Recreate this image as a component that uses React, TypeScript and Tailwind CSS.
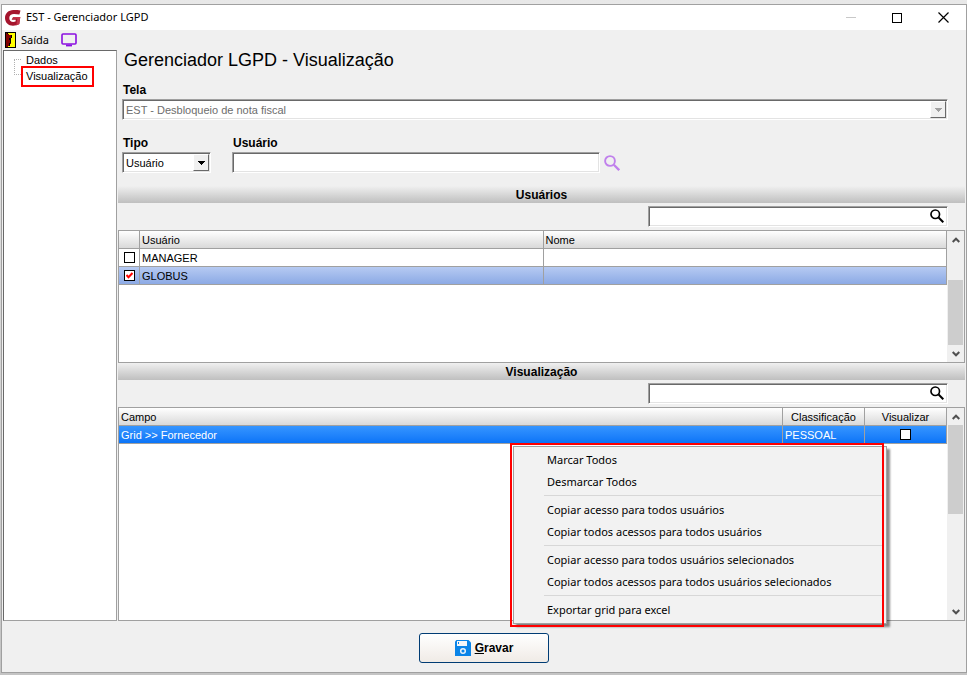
import { useState } from "react";

type IconProps = { className?: string };

function LogoIcon({ className = "" }: IconProps) {
  return (
    <svg className={className} viewBox="0 0 16 16" fill="none" aria-hidden="true">
      <path
        d="M15.500.6C13 .1 10.500 0 8.300.1 3.500.3 0 3.400 0 8c0 4.500 3.300 7.700 8 7.700 2.300 0 4.600-.6 6.300-1.700L15.300 7H8.200L6.600 9.800h4.200l-.3 1.700c-.7.3-1.400.5-2.200.5C6 12 4.300 10.400 4.300 8c0-2.600 1.900-4.100 4.700-4.100 1.800 0 3.600.2 5.400.7z"
        fill="#a5152d"
      />
      <path d="M8.200 7h7.100l-1 7c-.9.600-1.900 1-3 1.300l1-6.500H7.200z" fill="#c4344a" />
    </svg>
  );
}

function DoorIcon({ className = "" }: IconProps) {
  return (
    <svg className={className} viewBox="0 0 11 16" shapeRendering="crispEdges" aria-hidden="true">
      <path d="M0 0h11v16H0z" fill="#000" />
      <path d="M3 1h7v14H3z" fill="#ff0" />
      <path d="M1 1h1v1h2v1h2v9H5v1H4v1H3v1H1z" fill="#800000" />
      <path d="M6 3h1v3H6zM5 6h1v5H5zM4 11h1v3H4zM4 6h1v2H4z" fill="#000" />
    </svg>
  );
}

function MonitorIcon({ className = "" }: IconProps) {
  return (
    <svg className={className} viewBox="0 0 16 14" fill="none" aria-hidden="true">
      <rect x="1" y="1" width="14" height="10" rx="1" stroke="#8a0fe0" strokeWidth="1.600" />
      <path d="M5 12.500h6" stroke="#8a0fe0" strokeWidth="1.800" />
    </svg>
  );
}

function SearchIcon({ className = "" }: IconProps) {
  return (
    <svg className={className} viewBox="0 0 16 16" fill="none" stroke="currentColor" aria-hidden="true">
      <circle cx="6" cy="6" r="4.900" strokeWidth="1.900" />
      <path d="M9.800 9.800l5.400 5.400" strokeWidth="2.300" />
    </svg>
  );
}

function SaveIcon({ className = "" }: IconProps) {
  return (
    <svg className={className} viewBox="0 0 16 16" aria-hidden="true">
      <path d="M1.500 0h12L16 2.500V16H0V1.500z" fill="#0a84e8" />
      <path d="M2 1h10v5H2z" fill="#f4f6f8" />
      <path d="M3 2h1v2H3z" fill="#0a84e8" />
      <circle cx="8" cy="11" r="2.300" fill="#0a84e8" stroke="#e8f2fb" strokeWidth="1.500" />
    </svg>
  );
}

const sunken =
  "border border-t-[#a0a0a0] border-r-white border-b-white border-l-[#a0a0a0] bg-white p-px shadow-[inset_1px_1px_0_#696969,inset_-1px_-1px_0_#e3e3e3]";

function Combo({
  id,
  options,
  disabled = false,
}: {
  id: string;
  options: string[];
  disabled?: boolean;
}) {
  return (
    <div className={`mt-px flex h-[21px] ${sunken}`}>
      <select
        id={id}
        disabled={disabled}
        className="min-w-0 flex-1 appearance-none bg-white px-0.5 text-[11px] leading-4 text-black outline-none disabled:text-[#6d6d6d] disabled:opacity-100"
      >
        {options.map((option) => (
          <option key={option}>{option}</option>
        ))}
      </select>
      <span
        className={[
          "pointer-events-none flex w-4 items-center justify-center border border-t-white border-r-[#696969] border-b-[#696969] border-l-white bg-[#f0f0f0]",
          disabled ? "text-[#a0a0a0]" : "text-black",
        ].join(" ")}
      >
        <svg width="7" height="4" viewBox="0 0 7 4" fill="currentColor" shapeRendering="crispEdges" aria-hidden="true">
          <path d="M0 0h7L4 4H3z" />
        </svg>
      </span>
    </div>
  );
}

function SectionBar({ title }: { title: string }) {
  return (
    <h2 className="h-[17px] shrink-0 bg-linear-to-b from-[#f0f0f0] to-[#bfbfbf] text-center text-xs leading-[18px] font-bold">
      {title}
    </h2>
  );
}

function SearchRow({ label }: { label: string }) {
  return (
    <div className="flex h-[27px] shrink-0 items-center justify-end pr-[17px]">
      <div className={`flex h-[21px] w-[300px] items-center ${sunken}`}>
        <input type="text" aria-label={label} className="min-w-0 flex-1 px-0.5 text-[11px] outline-none" />
        <button type="button" aria-label="Pesquisar" className="px-0.5 pb-0.5">
          <SearchIcon className="h-3.5 w-3.5 text-black" />
        </button>
      </div>
    </div>
  );
}

function ScrollBar({ thumb }: { thumb: string }) {
  return (
    <div className="flex w-[17px] shrink-0 flex-col bg-[#f0f0f0] px-px text-[#505050]">
      <button type="button" aria-label="Rolar para cima" className="flex h-[17px] items-center justify-center">
        <svg width="8" height="6" viewBox="0 0 8 6" fill="none" stroke="currentColor" strokeWidth="2" aria-hidden="true">
          <path d="M.7 5L4 1.700 7.300 5" />
        </svg>
      </button>
      <div className="flex flex-1 flex-col">
        <div className={thumb} />
      </div>
      <button type="button" aria-label="Rolar para baixo" className="flex h-[17px] items-center justify-center">
        <svg width="8" height="6" viewBox="0 0 8 6" fill="none" stroke="currentColor" strokeWidth="2" aria-hidden="true">
          <path d="M.7 1L4 4.300 7.300 1" />
        </svg>
      </button>
    </div>
  );
}

function Check({
  label,
  checked,
  onChange,
}: {
  label: string;
  checked: boolean;
  onChange: (checked: boolean) => void;
}) {
  return (
    <label className="grid h-[17px] place-items-center">
      <input
        type="checkbox"
        aria-label={label}
        checked={checked}
        onChange={(e) => onChange(e.target.checked)}
        className="peer col-start-1 row-start-1 h-[11px] w-[11px] appearance-none border border-black bg-white"
      />
      <svg
        className="pointer-events-none invisible col-start-1 row-start-1 h-[7px] w-[7px] peer-checked:visible"
        viewBox="0 0 7 7"
        fill="none"
        stroke="#f00"
        strokeWidth="2"
        aria-hidden="true"
      >
        <path d="M.5 3l2 2.300L6.500 1" />
      </svg>
    </label>
  );
}

const headCell =
  "h-[18px] border-r border-b border-[#a0a0a0] bg-linear-to-b from-white to-[#d9d9d9] p-0 leading-4 font-normal";
const bodyCell = "h-[18px] truncate border-r border-b border-[#a0a0a0] p-0 leading-4";

const menuGroups = [
  ["Marcar Todos", "Desmarcar Todos"],
  ["Copiar acesso para todos usuários", "Copiar todos acessos para todos usuários"],
  [
    "Copiar acesso para todos usuários selecionados",
    "Copiar todos acessos para todos usuários selecionados",
  ],
  ["Exportar grid para excel"],
];

function ContextMenu() {
  return (
    <div className="absolute top-[35px] right-20 w-[374px] py-[3px] pl-[3px]">
      <div
        role="menu"
        className="-mr-[3px] border border-[#a0a0a0] bg-[#f2f2f2] py-0.5 pl-[30px] shadow-[3px_3px_2px_0_rgba(0,0,0,0.45)]"
      >
        {menuGroups.map((group, i) => (
          <div key={group[0]} className={i > 0 ? "mt-0.5 mr-1 border-t border-[#d7d7d7] pt-[3px]" : ""}>
            {group.map((item) => (
              <button
                key={item}
                type="button"
                role="menuitem"
                className="block h-[22px] w-full pl-[3px] text-left font-['Noto_Sans',sans-serif] text-[11px] leading-[22px] whitespace-nowrap"
              >
                {item}
              </button>
            ))}
          </div>
        ))}
      </div>
      {/* Highlight frame, drawn over the menu edge */}
      <div className="pointer-events-none absolute inset-0 border-2 border-[#f00]" />
    </div>
  );
}

export default function App() {
  const [users, setUsers] = useState([
    { name: "MANAGER", checked: false },
    { name: "GLOBUS", checked: true },
  ]);
  const [visible, setVisible] = useState(false);

  const toggleUser = (name: string, checked: boolean) =>
    setUsers((list) => list.map((u) => (u.name === name ? { ...u, checked } : u)));

  return (
    <div className="flex min-h-screen bg-linear-to-b from-[#e8e8e8] to-[#c4c4c4] pt-1 pb-0.5 pl-px font-['Liberation_Sans',Arial,sans-serif] text-[11px] text-black">
      <div className="flex min-w-0 flex-1 flex-col border border-[#a0a0a0] bg-[#f0f0f0]">
        {/* Title bar */}
        <header className="flex h-[25px] items-center bg-white pl-[3px] font-['Noto_Sans',sans-serif]">
          <LogoIcon className="h-4 w-4" />
          <span className="ml-[5px] flex-1">EST - Gerenciador LGPD</span>
          <button type="button" aria-label="Minimizar" className="flex w-[46px] justify-center">
            <span className="h-px w-2.5 bg-[#c8c8c8]" />
          </button>
          <button type="button" aria-label="Maximizar" className="flex w-[46px] justify-center">
            <span className="h-2.5 w-2.5 border border-black" />
          </button>
          <button type="button" aria-label="Fechar" className="flex w-[46px] justify-center">
            <svg width="11" height="11" viewBox="0 0 11 11" stroke="#000" strokeWidth="1.200" aria-hidden="true">
              <path d="M.5.5l10 10M10.500.5l-10 10" />
            </svg>
          </button>
        </header>

        {/* Toolbar */}
        <div className="flex h-5 items-center pl-[3px] font-['Noto_Sans',sans-serif]">
          <button type="button" className="flex items-center gap-[5px]">
            <DoorIcon className="h-4 w-[11px]" />
            Saída
          </button>
          <button type="button" aria-label="Monitor" className="ml-3">
            <MonitorIcon className="h-3.5 w-4" />
          </button>
        </div>

        <div className="flex min-h-0 flex-1">
          {/* Tree */}
          <nav className="mx-px w-[114px] shrink-0 border border-t-[#696969] border-r-[#a0a0a0] border-b-[#a0a0a0] border-l-[#696969] bg-white pl-2.5">
            <div className="flex">
              <div className="mt-2 h-4 w-[7px] border-y border-l border-dotted border-[#b0b0b0]" />
              <ul>
                <li>
                  <a href="#dados" className="block h-[15px] pl-[5px] leading-[19px]">
                    Dados
                  </a>
                </li>
                <li>
                  <a
                    href="#visualizacao"
                    className="block h-[21px] w-[73px] border-2 border-[#f00] pl-[3px] leading-[17px]"
                  >
                    Visualização
                  </a>
                </li>
              </ul>
            </div>
          </nav>

          <main className="flex min-w-0 flex-1 flex-col pr-px">
            <form className="h-[136px] shrink-0 pr-[17px] pl-1">
              <h1 className="pl-0.5 text-[18px] leading-5">Gerenciador LGPD - Visualização</h1>
              <label htmlFor="tela" className="mt-3 block pl-px text-[12px] leading-4 font-bold">
                Tela
              </label>
              <Combo id="tela" disabled options={["EST - Desbloqueio de nota fiscal"]} />
              <div className="mt-[15px] flex items-end">
                <div className="w-[89px]">
                  <label htmlFor="tipo" className="block pl-px text-[12px] leading-4 font-bold">
                    Tipo
                  </label>
                  <Combo id="tipo" options={["Usuário", "Grupo"]} />
                </div>
                <div className="ml-[21px] w-[368px]">
                  <label htmlFor="usuario" className="block pl-px text-[12px] leading-4 font-bold">
                    Usuário
                  </label>
                  <input id="usuario" type="text" className={`mt-px block h-[21px] w-full outline-none ${sunken}`} />
                </div>
                <button type="button" aria-label="Buscar usuário" className="mb-0.5 ml-1">
                  <SearchIcon className="h-4 w-4 text-[#c080ec]" />
                </button>
              </div>
            </form>

            <SectionBar title="Usuários" />
            <SearchRow label="Pesquisar usuários" />
            <div className="flex h-[133px] shrink-0 border border-[#a0a0a0] bg-white">
              <div className="min-w-0 flex-1">
                <table className="w-full table-fixed border-separate border-spacing-0 text-left">
                  <thead>
                    <tr>
                      <th className={`${headCell} w-[21px]`} aria-label="Selecionar" />
                      <th className={`${headCell} pl-0.5`}>Usuário</th>
                      <th className={`${headCell} pl-0.5`}>Nome</th>
                    </tr>
                  </thead>
                  <tbody>
                    {users.map((user) => (
                      <tr
                        key={user.name}
                        className={user.checked ? "bg-linear-to-b from-[#b6caf2] to-[#8aa8e4]" : "bg-white"}
                      >
                        <td className={bodyCell}>
                          <Check
                            label={user.name}
                            checked={user.checked}
                            onChange={(checked) => toggleUser(user.name, checked)}
                          />
                        </td>
                        <td className={`${bodyCell} pl-0.5`}>{user.name}</td>
                        <td className={bodyCell} />
                      </tr>
                    ))}
                  </tbody>
                </table>
              </div>
              <ScrollBar thumb="mt-8 h-[65px] bg-[#cdcdcd]" />
            </div>

            <SectionBar title="Visualização" />
            <SearchRow label="Pesquisar campos" />
            <div className="relative flex min-h-[214px] flex-1 border border-[#a0a0a0] bg-white">
              <div className="min-w-0 flex-1">
                <table className="w-full table-fixed border-separate border-spacing-0 text-left">
                  <thead>
                    <tr>
                      <th className={`${headCell} pl-0.5`}>Campo</th>
                      <th className={`${headCell} w-[82px] text-center`}>Classificação</th>
                      <th className={`${headCell} w-[82px] text-center`}>Visualizar</th>
                    </tr>
                  </thead>
                  <tbody>
                    <tr className="bg-linear-to-b from-[#3595ff] to-[#0672f7] text-white">
                      <td className={`${bodyCell} pl-0.5`}>Grid &gt;&gt; Fornecedor</td>
                      <td className={`${bodyCell} pl-0.5`}>PESSOAL</td>
                      <td className={bodyCell}>
                        <Check label="Visualizar Grid &gt;&gt; Fornecedor" checked={visible} onChange={setVisible} />
                      </td>
                    </tr>
                  </tbody>
                </table>
              </div>
              <ScrollBar thumb="h-[89px] bg-[#cdcdcd]" />
              <ContextMenu />
            </div>
          </main>
        </div>

        <footer className="flex h-[51px] shrink-0 items-center justify-center pt-0.5">
          <button
            type="button"
            className="flex h-[30px] w-[130px] items-center justify-center gap-1 rounded-[3px] border border-[#003c74] bg-linear-to-b from-white to-[#f0ebe6] text-[12px] font-bold"
          >
            <SaveIcon className="h-4 w-4" />
            <span>
              <span className="underline">G</span>ravar
            </span>
          </button>
        </footer>
      </div>
    </div>
  );
}
